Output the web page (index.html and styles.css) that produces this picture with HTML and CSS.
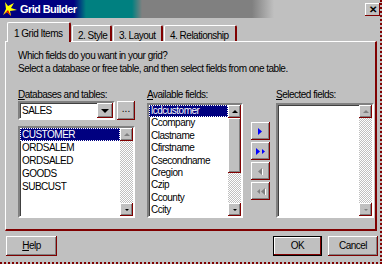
FILE: index.html
```html
<!DOCTYPE html>
<html lang="en">
<head>
  <meta charset="UTF-8">
  <title>Grid Builder</title>
  <link rel="stylesheet" href="styles.css">
</head>
<body>
  <div class="window">
    <div class="titlebar">
      <svg class="app-icon" width="16" height="16" viewBox="0 0 16 16">
        <polygon points="3,1 6,5 12,2 9,7 15,9 8,10 9,15 5,11 1,14 4,8" fill="#ffff00"/>
        <polygon points="1,14 5,11 9,15 6,9" fill="#e00000"/>
      </svg>
      <span class="title">Grid Builder</span>
      <div class="close">&#x2715;</div>
    </div>

    <div class="tabs">
      <div class="tab active tab-1">1 Grid Items</div>
      <div class="tab tab-2">2. Style</div>
      <div class="tab tab-3">3. Layout</div>
      <div class="tab tab-4">4. Relationship</div>
    </div>

    <div class="panel">
      <p class="intro">Which fields do you want in your grid?<br>Select a database or free table, and then select fields from one table.</p>

      <div class="columns">
        <div class="col col-tables">
          <label class="field-label"><u>D</u>atabases and tables:</label>
          <div class="combo-row">
            <div class="combo">
              <span class="combo-text">SALES</span>
              <span class="combo-drop raised"><span class="tri-down"></span></span>
            </div>
            <div class="dots raised">...</div>
          </div>
          <div class="listbox list-tables">
            <div class="items">
              <div class="item sel">CUSTOMER</div>
              <div class="item">ORDSALEM</div>
              <div class="item">ORDSALED</div>
              <div class="item">GOODS</div>
              <div class="item">SUBCUST</div>
            </div>
            <div class="sb">
              <div class="sb-btn raised"><span class="tri-up off"></span></div>
              <div class="track"></div>
              <div class="sb-btn raised"><span class="tri-down small"></span></div>
            </div>
          </div>
        </div>

        <div class="col col-fields">
          <label class="field-label"><u>A</u>vailable fields:</label>
          <div class="listbox list-fields">
            <div class="items">
              <div class="item sel">lcdcustomer</div>
              <div class="item">Ccompany</div>
              <div class="item">Clastname</div>
              <div class="item">Cfirstname</div>
              <div class="item">Csecondname</div>
              <div class="item">Cregion</div>
              <div class="item">Czip</div>
              <div class="item">Ccounty</div>
              <div class="item">Ccity</div>
            </div>
            <div class="sb">
              <div class="sb-btn raised"><span class="tri-up"></span></div>
              <div class="thumb raised"></div>
              <div class="track"></div>
              <div class="sb-btn raised"><span class="tri-down small"></span></div>
            </div>
          </div>
        </div>

        <div class="col col-move">
          <div class="move raised">
            <svg width="5" height="7" viewBox="0 0 5 7"><polygon points="0,0 4,3.5 0,7" fill="#0000ff"/></svg>
          </div>
          <div class="move raised">
            <svg width="10" height="7" viewBox="0 0 10 7"><polygon points="0,0 4,3.5 0,7" fill="#0000ff"/><polygon points="6,1 9,3.5 6,6" fill="#0000ff"/></svg>
          </div>
          <div class="move raised">
            <svg width="6" height="7" viewBox="0 0 6 7"><polygon points="4,0 0,3.5 4,7" fill="#808080"/><rect x="4" y="1" width="1" height="6" fill="#fff"/></svg>
          </div>
          <div class="move raised">
            <svg width="10" height="7" viewBox="0 0 10 7"><polygon points="4,1 1,3.5 4,6" fill="#808080"/><polygon points="9,0 5,3.5 9,7" fill="#808080"/><rect x="9" y="1" width="1" height="6" fill="#fff"/></svg>
          </div>
        </div>

        <div class="col col-selected">
          <label class="field-label"><u>S</u>elected fields:</label>
          <div class="listbox list-selected">
            <div class="items"></div>
            <div class="sb">
              <div class="sb-btn raised"><span class="tri-up off"></span></div>
              <div class="track"></div>
              <div class="sb-btn raised"><span class="tri-down small off"></span></div>
            </div>
          </div>
        </div>
      </div>
    </div>

    <div class="footer">
      <div class="btn raised btn-help"><u>H</u>elp</div>
      <div class="spacer"></div>
      <div class="btn raised btn-ok">OK</div>
      <div class="btn raised btn-cancel">Cancel</div>
    </div>
  </div>
</body>
</html>
```

FILE: styles.css
```css
* {
  margin: 0;
  padding: 0;
  box-sizing: border-box;
}

body {
  background-color: #c0c0c0;
  font-family: "Liberation Sans", Arial, sans-serif;
  font-size: 10px;
  letter-spacing: -0.5px;
  color: #000;
  overflow: hidden;
}

.window {
  width: 382px;
  height: 264px;
  display: flex;
  flex-direction: column;
  border-right: 2px dotted #800000;
  border-bottom: 2px dotted #800000;
}

/* shared bevel, shadows are dark red in this theme */
.raised {
  background-color: #c0c0c0;
  box-shadow: inset -1px -1px #800000, inset 1px 1px #fff, inset -2px -2px #808080;
}

/* title bar */
.titlebar {
  height: 18px;
  flex-shrink: 0;
  display: flex;
  align-items: center;
  padding-left: 2px;
  background: linear-gradient(to right, #000080 0, #000080 74px, #008080 86px, #008080 132px, #808080 142px, #808080 252px, #c0c0c0 274px);
}

.app-icon {
  flex-shrink: 0;
}

.title {
  margin-left: 2px;
  color: #fff;
  font-weight: bold;
  font-size: 11px;
  letter-spacing: -0.6px;
}

.close {
  margin-left: auto;
  width: 15px;
  height: 13px;
  font-size: 10px;
  font-weight: bold;
  line-height: 13px;
  text-align: center;
  background-color: #c0c0c0;
  box-shadow: inset -1px -1px #800000, inset 1px 1px #fff;
}

/* tabs */
.tabs {
  height: 23px;
  flex-shrink: 0;
  display: flex;
  align-items: flex-end;
  gap: 1px;
  padding-left: 7px;
}

.tab {
  height: 16px;
  padding: 3px 0 0 5px;
  line-height: 13px;
  white-space: nowrap;
  border-top: 1px solid #fff;
  border-left: 1px solid #fff;
  border-right: 2px solid #800000;
  border-radius: 2px 2px 0 0;
}

.tab.active {
  height: 20px;
  padding: 4px 0 0 6px;
  margin-bottom: -1px;
  position: relative;
  z-index: 1;
  background-color: #c0c0c0;
}

.tab-1 { width: 64px; }
.tab-2 { width: 40px; }
.tab-3 { width: 50px; }
.tab-4 { width: 73px; }

/* panel */
.panel {
  margin-left: 5px;
  width: 372px;
  height: 190px;
  flex-shrink: 0;
  padding: 7px 0 0 12px;
  border-top: 1px solid #fff;
  border-left: 1px solid #fff;
  border-right: 2px solid #800000;
  border-bottom: 2px solid #800000;
}

.intro {
  line-height: 13px;
  white-space: nowrap;
}

.columns {
  display: flex;
  margin-top: 14px;
}

.col {
  display: flex;
  flex-direction: column;
}

.col-tables { width: 117px; }
.col-fields { width: 96px; margin-left: 12px; }
.col-move { width: 19px; margin-left: 8px; margin-top: 33px; gap: 2px; }
.col-selected { width: 98px; margin-left: 6px; }

.field-label {
  display: block;
  line-height: 12px;
  height: 12px;
  white-space: nowrap;
}

/* combo */
.combo-row {
  display: flex;
  gap: 2px;
  height: 19px;
}

.combo {
  width: 97px;
  display: flex;
  background-color: #fff;
  border: 2px solid;
  border-color: #808080 #fff #fff #808080;
  box-shadow: inset 1px 1px #404040;
}

.combo-text {
  flex: 1;
  padding-left: 2px;
  line-height: 15px;
}

.combo-drop {
  width: 16px;
  display: flex;
  align-items: center;
  justify-content: center;
}

.dots {
  width: 18px;
  text-align: center;
  line-height: 16px;
  letter-spacing: 0;
}

/* list boxes */
.listbox {
  display: flex;
  background-color: #fff;
  border: 2px solid;
  border-color: #808080 #fff #fff #808080;
  box-shadow: inset 1px 1px #404040;
}

.list-tables { margin-top: 6px; height: 92px; }
.list-fields { margin-top: 2px; height: 115px; }
.list-selected { margin-top: 2px; height: 115px; }

.items {
  flex: 1;
  overflow: hidden;
}

.item {
  line-height: 13px;
  padding-left: 2px;
  white-space: nowrap;
}

.list-fields .item {
  line-height: 12.4px;
}

.item.sel {
  background-color: #000080;
  color: #fff;
  outline: 1px dotted #fff;
  outline-offset: -1px;
}

/* scrollbars */
.sb {
  width: 13px;
  display: flex;
  flex-direction: column;
}

.sb-btn {
  height: 13px;
  flex-shrink: 0;
  display: flex;
  align-items: center;
  justify-content: center;
}

.thumb {
  height: 55px;
  flex-shrink: 0;
}

.track {
  flex: 1;
  background: repeating-conic-gradient(#fff 0 25%, #c0c0c0 0 50%) 0 0 / 2px 2px;
}

.tri-up {
  width: 0;
  height: 0;
  border-left: 3px solid transparent;
  border-right: 3px solid transparent;
  border-bottom: 3px solid #000;
}

.tri-down {
  width: 0;
  height: 0;
  border-left: 4px solid transparent;
  border-right: 4px solid transparent;
  border-top: 4px solid #000;
}

.tri-down.small {
  border-left-width: 2px;
  border-right-width: 2px;
  border-top-width: 2px;
}

.tri-up.off { border-bottom-color: #808080; }
.tri-down.off { border-top-color: #808080; }

/* move buttons */
.move {
  height: 18px;
  display: flex;
  align-items: center;
  justify-content: center;
}

/* footer buttons */
.footer {
  display: flex;
  padding: 5px 2px 0 6px;
}

.btn {
  height: 20px;
  line-height: 20px;
  text-align: center;
}

.btn-help { width: 51px; }
.btn-ok {
  width: 49px;
  margin-right: 6px;
  box-shadow: inset 0 0 0 1px #000, inset -2px -2px #800000, inset 2px 2px #fff;
}
.btn-cancel { width: 50px; }

.spacer {
  flex: 1;
}
```
